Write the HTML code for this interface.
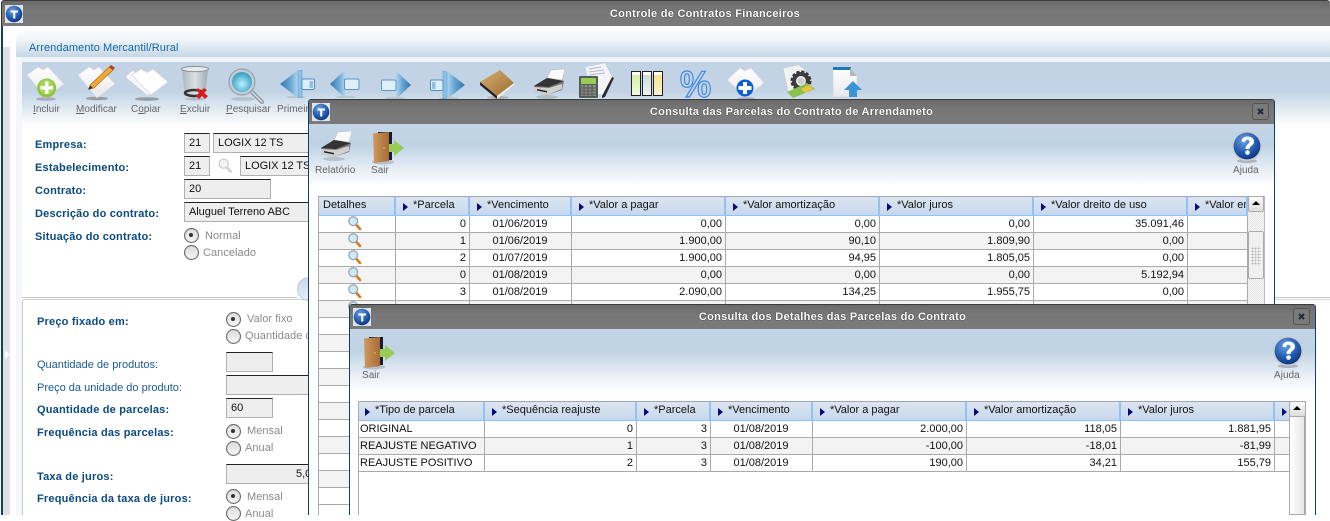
<!DOCTYPE html>
<html><head><meta charset="utf-8">
<style>
*{box-sizing:border-box}
html,body{margin:0;padding:0;width:1330px;height:515px;overflow:hidden;background:#fff;font-family:"Liberation Sans",sans-serif;font-size:11px;color:#111}
.a{position:absolute}
svg.a{overflow:visible}
.tb{position:absolute;left:0;right:0;top:0;height:25px;background:linear-gradient(#6a6a6a,#787878 40%,#7a7a7a);border-top:1px solid #3c3c3c;color:#fff;font-weight:bold;text-align:center;line-height:25px;letter-spacing:.28px;text-shadow:0 0 1px #000}
.lbl{position:absolute;font-weight:bold;color:#0a4a80;font-size:11px;line-height:14px;white-space:nowrap;letter-spacing:.2px}
.lbr{position:absolute;color:#1a5a90;font-size:11px;line-height:14px;white-space:nowrap;letter-spacing:0}
.inp{position:absolute;background:#eee;border:1px solid #b0b0b0;border-top:1px solid #222;height:20px;line-height:18px;padding-left:4px;font-size:11px;letter-spacing:-.05px;overflow:hidden;white-space:nowrap}
.rad{position:absolute;width:15px;height:15px;border-radius:50%;border:1.5px solid #666;background:linear-gradient(#ddd,#f4f4f4);box-shadow:inset 0 0 1px #999}
.rad.on:after{content:"";position:absolute;left:4px;top:4px;width:4px;height:4px;border-radius:50%;background:#333}
.rt{position:absolute;color:#8a8a8a;font-size:11px;line-height:14px;white-space:nowrap;letter-spacing:.05px}
.ic{position:absolute;color:#666;font-size:10px;line-height:12px;letter-spacing:.03px;white-space:nowrap}
.ic u{text-decoration:underline}
.win{position:absolute;background:#fff;border-left:1px solid #0e3f70;border-right:1px solid #0e3f70;overflow:hidden;border-radius:3px 3px 0 0}
.wgrad{position:absolute;left:0;right:0;top:25px;height:62px;background:linear-gradient(#c2d4e6,#c0d3e5 35%,#e6edf4 72%,#fff)}
table{position:absolute;border-collapse:separate;border-spacing:0;table-layout:fixed;font-size:11px;color:#111;background:#fff}
th{height:20px;font-weight:normal;text-align:left;background:linear-gradient(#dde5ef,#c6d8ee);border-top:1px solid #9aa8b8;border-bottom:1px solid #8fc3f5;border-right:2px solid #8fc3f5;padding:0 0 2px 4px;white-space:nowrap;overflow:hidden}
th i{display:inline-block;width:0;height:0;border-left:5px solid #0a0a78;border-top:4px solid transparent;border-bottom:4px solid transparent;margin:0 5px 0 3px;vertical-align:-3px}
td{height:17px;padding:1px 3px 0 2px;border-right:1px solid #aaa;border-bottom:1px solid #aaa;white-space:nowrap;overflow:hidden;line-height:15px;position:relative}
tr.e td{background:#f3f3f3}
td.r{text-align:right}
td.c{text-align:center}
td svg{display:block;position:relative;margin:0 auto;top:-1px;left:-1px}
.x{position:absolute;width:17px;height:17px;border:1px solid #555;border-radius:3px;background:#7a7a7a}
</style></head><body>
<svg width="0" height="0" style="position:absolute">
<defs>
<radialGradient id="gS" cx=".4" cy=".3" r=".8"><stop offset="0" stop-color="#6fa0e0"/><stop offset=".6" stop-color="#1e58ae"/><stop offset="1" stop-color="#0c2a6a"/></radialGradient>
<linearGradient id="gSh" x1="0" y1="0" x2="0" y2="1"><stop offset="0" stop-color="#fff"/><stop offset="1" stop-color="#e8e8ee"/></linearGradient>
<linearGradient id="gAr" x1="0" y1="0" x2="1" y2="0"><stop offset="0" stop-color="#2f78b4"/><stop offset=".6" stop-color="#6ba8d4"/><stop offset="1" stop-color="#b4d6ee"/></linearGradient>
<linearGradient id="gAr2" x1="0" y1="0" x2="1" y2="0"><stop offset="0" stop-color="#b4d6ee"/><stop offset=".4" stop-color="#6ba8d4"/><stop offset="1" stop-color="#2f78b4"/></linearGradient>
<linearGradient id="gBk" x1="0" y1="0" x2="1" y2="1"><stop offset="0" stop-color="#d8b070"/><stop offset="1" stop-color="#9a6c30"/></linearGradient>
<linearGradient id="gDr" x1="0" y1="0" x2="1" y2="0"><stop offset="0" stop-color="#d09a60"/><stop offset="1" stop-color="#a56c34"/></linearGradient>
<linearGradient id="gTr" x1="0" y1="0" x2="1" y2="0"><stop offset="0" stop-color="#a8b0b4"/><stop offset=".5" stop-color="#dfe4e6"/><stop offset="1" stop-color="#9aa2a6"/></linearGradient>
<radialGradient id="gLn" cx=".5" cy=".6" r=".6"><stop offset="0" stop-color="#b8f0f8"/><stop offset="1" stop-color="#2f9cc4"/></radialGradient>

<symbol id="logo" viewBox="0 0 18 18"><rect width="18" height="18" fill="#dfe3e8"/><circle cx="9" cy="9" r="8.3" fill="url(#gS)"/><path d="M5.500 5.500h7.500v2h-2.700V13.500H8.200V7.500H5.500z" fill="#fff"/></symbol>

<symbol id="sheet" viewBox="0 0 38 36"><path d="M0 9 11 1l5 3 5-3 16 17-18 14z" fill="url(#gSh)" stroke="#d8d8e0" stroke-width=".6"/><path d="M11 1l5 3 5-3z" fill="#d8d0e0"/></symbol>

<symbol id="pr" viewBox="0 0 33 30"><ellipse cx="14" cy="28" rx="11" ry="2" fill="#9aa" opacity=".55"/><path d="M14 9 18 1 32 0l-3 11z" fill="#fafafa" stroke="#bbb" stroke-width=".5"/><path d="M1 17 14 9l17 3-2 9-15 5-13-3z" fill="#7a7a7a"/><path d="M1 17l13-8 17 3-15 6z" fill="#333"/><path d="M1 18l15 1 13-4v5l-15 6-13-3z" fill="#d0d0d0"/><path d="M4 20l10 2v1.500L4 21.500z" fill="#222"/></symbol>

<symbol id="door" viewBox="0 0 32 33"><ellipse cx="11" cy="30" rx="11" ry="2.500" fill="#8a9aa8" opacity=".5"/><rect x="6" y="0" width="14" height="28" fill="#1a1a38"/><path d="M1 1.500 17 0v29L2 31z" fill="url(#gDr)"/><circle cx="12" cy="16" r=".8" fill="#f2d040"/><path d="M17 12h5V8l10 8-10 8v-4h-5z" fill="#98cc58"/></symbol>

<symbol id="help" viewBox="0 0 31 32"><ellipse cx="15" cy="30" rx="10" ry="2" fill="#888" opacity=".55"/><circle cx="15" cy="15" r="15" fill="#c8ccd4"/><circle cx="15" cy="15" r="13.400" fill="url(#gS)"/><path d="M9.500 10.500C10 6.500 13 5.500 15.500 5.500c4 0 6.500 2.300 6.500 5.200 0 3.800-4.500 4-4.500 7.300h-4c0-4.500 4-5 4-7.200 0-1.300-1-2-2.200-2-1.500 0-2.200 1-2.300 2.500z" fill="#fff"/><circle cx="15.500" cy="21.500" r="2.300" fill="#fff"/></symbol>

<symbol id="mag" viewBox="0 0 14 15"><path d="M8.500 9l3.500 4" stroke="#d87a20" stroke-width="2.600" stroke-linecap="round"/><circle cx="5.200" cy="5.200" r="4.400" fill="#cfeaf4" stroke="#9aa6ae" stroke-width="1.300"/></symbol>

<symbol id="arL" viewBox="0 0 30 28"><ellipse cx="16" cy="27.300" rx="10" ry="1.500" fill="#9aa" opacity=".4"/><path d="M0 14 15 0v28z" fill="url(#gAr)"/><rect x="14.500" y="9" width="14.500" height="10.500" rx="1.500" fill="#e0eef8" stroke="#5a98c8"/></symbol>
<symbol id="arR" viewBox="0 0 30 28"><ellipse cx="14" cy="27.300" rx="10" ry="1.500" fill="#9aa" opacity=".4"/><path d="M30 14 15 0v28z" fill="url(#gAr2)"/><rect x=".5" y="9" width="14.500" height="10.500" rx="1.500" fill="#e0eef8" stroke="#5a98c8"/></symbol>
<symbol id="arLL" viewBox="0 0 35 28"><ellipse cx="16" cy="27.300" rx="10" ry="1.500" fill="#9aa" opacity=".4"/><path d="M0 14 18 0v28z" fill="url(#gAr)"/><path d="M18 1l4-1v28l-4-1z" fill="#8cc0e8" stroke="#5a98c8" stroke-width=".5"/><rect x="22" y="9" width="12.500" height="10.500" rx="1.500" fill="#e0eef8" stroke="#4f90c4"/><rect x="29.500" y="11" width="3.500" height="7" fill="#8cc0e4"/></symbol>
<symbol id="arRR" viewBox="0 0 35 28"><ellipse cx="19" cy="27.300" rx="10" ry="1.500" fill="#9aa" opacity=".4"/><path d="M35 14 17 0v28z" fill="url(#gAr2)"/><path d="M17 1l-4-1v28l4-1z" fill="#8cc0e8" stroke="#5a98c8" stroke-width=".5"/><rect x=".5" y="9" width="12.500" height="10.500" rx="1.500" fill="#e0eef8" stroke="#4f90c4"/><rect x="2" y="11" width="3.500" height="7" fill="#8cc0e4"/></symbol>
</defs>
</svg>

<!-- main window -->
<div class="a" style="left:0;top:0;width:1330px;height:515px;background:#fff">
  <div class="a" style="left:1px;top:26px;width:2px;height:489px;background:#0e3f70"></div>
  <div class="a" style="left:3px;top:47px;width:7px;height:468px;background:#e0e0e0"></div>
  <svg class="a" style="left:5px;top:350px" width="6" height="9"><path d="M0 0l5 4.500L0 9z" fill="#fff"/></svg>
  <div class="a" style="left:16px;top:31px;width:1314px;height:26px;border-radius:9px 0 0 0;background:linear-gradient(#f8fbfd,#eef4f9 35%,#c6d7e6)"></div>
  <div class="a" style="left:16px;top:57px;width:1314px;height:5px;background:#eef3f8"></div>
  <div class="a" style="left:16px;top:57px;width:6px;height:458px;background:#f3f7fa"></div>
  <div class="a" style="left:22px;top:62px;width:1308px;height:64px;background:linear-gradient(#c1d3e5,#c1d3e5 45%,#e8eff5 80%,#fff)"></div>
  <div class="tb" style="height:26px;top:0;left:1px;border-radius:3px 3px 0 0;border-left:1px solid #333;line-height:27px;padding-left:78px">Controle de Contratos Financeiros</div>
  <svg class="a" style="left:5px;top:5px" width="18" height="18"><use href="#logo"/></svg>
  <div class="a" style="left:29px;top:41px;color:#1467a8;font-size:11px;line-height:14px;letter-spacing:.1px;white-space:nowrap">Arrendamento Mercantil/Rural</div>

  <!-- toolbar icons -->
  <svg class="a" style="left:27px;top:66px" width="38" height="36"><ellipse cx="19" cy="33" rx="10" ry="1.800" fill="#a080b0" opacity=".6"/><use href="#sheet"/><circle cx="19.700" cy="22" r="9.500" fill="#8cc63c"/><circle cx="19.700" cy="21" r="7.500" fill="#a8d658"/><path d="M18 15.500h3.500V20H26v3.500h-4.500V28H18v-4.500h-4.500V20H18z" fill="#fff"/></svg>
  <svg class="a" style="left:78px;top:65px" width="38" height="36"><ellipse cx="19" cy="33.500" rx="11" ry="1.800" fill="#666" opacity=".55"/><use href="#sheet" y="1"/><path d="M12 20 31 2l4 3-19 18-5 1.500z" fill="#f0a830" stroke="#a86a18" stroke-width=".6"/><path d="M31 2l2-2 4 3-2 2z" fill="#b83a30"/><path d="M10 24.500l2-4 3 2.500z" fill="#333"/></svg>
  <svg class="a" style="left:125px;top:66px" width="44" height="36"><ellipse cx="22" cy="33" rx="12" ry="1.800" fill="#666" opacity=".55"/><path d="M0 11 8 4l2 2 6-1 19 16-12 9z" fill="#f6f6f8" stroke="#cfcfd6" stroke-width=".6"/><path d="M7 9l9-6 3 2h6l3-2 15 13-17 13z" fill="#fff" stroke="#cfcfd6" stroke-width=".6"/><path d="M19 5l3 2 3-2z" fill="#d8d8e0"/></svg>
  <svg class="a" style="left:181px;top:66px" width="30" height="35"><ellipse cx="14" cy="33" rx="10" ry="1.500" fill="#888" opacity=".4"/><path d="M1 3h26l-3 27H4z" fill="url(#gTr)" opacity=".85"/><ellipse cx="14" cy="3" rx="13.500" ry="2.600" fill="#e6e9eb" stroke="#8a9298"/><ellipse cx="13" cy="27" rx="9" ry="3" fill="none" stroke="#333" stroke-width="2.500"/><path d="M17 22l3 3 3-3 3 2-3 3 4 3-3 3-3-3-3 3-3-3 3-3-3-3z" fill="#d81c1c"/></svg>
  <svg class="a" style="left:228px;top:68px" width="38" height="36"><ellipse cx="15" cy="31" rx="12" ry="2" fill="#a0a8b0" opacity=".5"/><path d="M23 23l11 11" stroke="#8a949c" stroke-width="4" stroke-linecap="round"/><path d="M23 23l11 11" stroke="#dde2e6" stroke-width="1.500" stroke-linecap="round"/><circle cx="14" cy="14" r="13" fill="#c4ccd2" stroke="#8f9aa2"/><circle cx="14" cy="14" r="10" fill="url(#gLn)"/></svg>
  <svg class="a" style="left:280px;top:70px" width="35" height="28"><use href="#arLL"/></svg>
  <svg class="a" style="left:330px;top:70px" width="30" height="28"><use href="#arL"/></svg>
  <svg class="a" style="left:381px;top:71px" width="30" height="28"><use href="#arR"/></svg>
  <svg class="a" style="left:430px;top:71px" width="35" height="28"><use href="#arRR"/></svg>
  <svg class="a" style="left:480px;top:70px" width="34" height="29"><ellipse cx="18" cy="27.500" rx="11" ry="1.500" fill="#888" opacity=".5"/><path d="M0 12 20 0l14 13-17 13z" fill="url(#gBk)"/><path d="M0 12l17 14v3L0 15z" fill="#222"/><path d="M17 26l17-13v2L17 29z" fill="#eee"/></svg>
  <svg class="a" style="left:533px;top:69px" width="33" height="30"><use href="#pr"/></svg>
  <svg class="a" style="left:579px;top:63px" width="36" height="36"><path d="M6 4 26 0l9 17-9 16-14-4z" fill="#f2f4f8" stroke="#c4ccd8" stroke-width=".5"/><path d="M10 6l12-2M10 9l15-2M10 12l16-2" stroke="#b0b8c4"/><path d="M23 33 33 14l2 1-9 19-3 1z" fill="#2c2c30"/><rect x="0" y="13" width="19" height="22" rx="1" fill="#555c58"/><rect x="2" y="15" width="15" height="6" fill="#9ccc50"/><rect x="2" y="22" width="15" height="11" fill="#8a8e8a"/><path d="M2 25h15M2 28h15M2 31h15M5 22v11M9 22v11M13 22v11" stroke="#555"/></svg>
  <svg class="a" style="left:631px;top:71px" width="33" height="27"><defs><linearGradient id="c1" x1="0" y1="0" x2="0" y2="1"><stop offset="0" stop-color="#d4ec9c"/><stop offset="1" stop-color="#f0fae0"/></linearGradient><linearGradient id="c2" x1="0" y1="0" x2="0" y2="1"><stop offset="0" stop-color="#c8d8d4"/><stop offset="1" stop-color="#eef4f2"/></linearGradient><linearGradient id="c3" x1="0" y1="0" x2="0" y2="1"><stop offset="0" stop-color="#fcdc84"/><stop offset="1" stop-color="#fdf3d0"/></linearGradient></defs><rect x=".5" y=".5" width="9" height="24" fill="url(#c1)" stroke="#222"/><rect x="11.500" y=".5" width="9" height="24" fill="url(#c2)" stroke="#222"/><rect x="22.500" y=".5" width="9" height="24" fill="url(#c3)" stroke="#222"/><rect x="1" y="1" width="8" height="3" fill="#fff"/><rect x="12" y="1" width="8" height="3" fill="#fff"/><rect x="23" y="1" width="8" height="3" fill="#fff"/></svg>
  <div class="a" style="left:680px;top:63px;font-size:37px;line-height:44px;font-weight:bold;color:#c6d3df;-webkit-text-stroke:1.200px #3c88e4;white-space:nowrap;transform:scaleX(.95);transform-origin:0 0">%</div>
  <svg class="a" style="left:727px;top:67px" width="38" height="36"><ellipse cx="19" cy="31.500" rx="9" ry="1.500" fill="#a080b0" opacity=".5"/><path d="M0 13 13 1l5 3 6-3 13 15-18 14z" fill="url(#gSh)" stroke="#d8d8e0" stroke-width=".6"/><path d="M13 1l5 3 6-3z" fill="#d8d0e0"/><circle cx="18" cy="21" r="8.500" fill="#0a5fd8"/><path d="M16 15h4v4h4.500v4H20v4h-4v-4h-4.500v-4H16z" fill="#fff"/></svg>
  <svg class="a" style="left:781px;top:65px" width="35" height="33"><path d="M2 3 18 0l6 5 1 19-17 6z" fill="#f0f3f0" stroke="#c8ccc8" stroke-width=".5"/><circle cx="20" cy="16" r="9" fill="none" stroke="#333" stroke-width="3" stroke-dasharray="3 1.700"/><circle cx="20" cy="16" r="7" fill="none" stroke="#3c3c3c" stroke-width="4"/><circle cx="20" cy="16" r="3.500" fill="#ccc"/><path d="M6 27l20-9 8 6-22 9z" fill="#8cc050"/><path d="M20 24l8-4 4 4-8 4z" fill="#f0c040"/></svg>
  <svg class="a" style="left:832px;top:66px" width="32" height="32"><path d="M1 2h17l7 8v21H1z" fill="url(#gSh)" stroke="#c8ccd0" stroke-width=".5"/><rect x="1" y="1" width="18" height="3" fill="#1e78b8"/><path d="M18 2l7 8h-7z" fill="#b4b8bc"/><path d="M21 15l9 9h-5v7h-8v-7h-5z" fill="#3a94d8"/></svg>

  <div class="ic" style="left:33px;top:104px"><u>I</u>ncluir</div>
  <div class="ic" style="left:76px;top:104px"><u>M</u>odificar</div>
  <div class="ic" style="left:131px;top:104px">C<u>o</u>piar</div>
  <div class="ic" style="left:180px;top:104px"><u>E</u>xcluir</div>
  <div class="ic" style="left:226px;top:104px"><u>P</u>esquisar</div>
  <div class="ic" style="left:277px;top:104px">Primeiro</div>

  <!-- form -->
  <div class="lbl" style="left:35px;top:138px">Empresa:</div>
  <div class="lbl" style="left:35px;top:161px">Estabelecimento:</div>
  <div class="lbl" style="left:35px;top:184px">Contrato:</div>
  <div class="lbl" style="left:35px;top:207px">Descrição do contrato:</div>
  <div class="lbl" style="left:35px;top:230px">Situação do contrato:</div>
  <div class="inp" style="left:184px;top:133px;width:26px">21</div>
  <div class="inp" style="left:213px;top:133px;width:100px">LOGIX 12 TS</div>
  <div class="inp" style="left:184px;top:156px;width:26px">21</div>
  <svg class="a" style="left:218px;top:158px;opacity:.55" width="14" height="15"><path d="M8.500 9l4 4.500" stroke="#aaa" stroke-width="2.600" stroke-linecap="round"/><circle cx="5.700" cy="5.700" r="4.600" fill="#e8eef0" stroke="#a8a8a8" stroke-width="1.300"/></svg>
  <div class="inp" style="left:240px;top:156px;width:75px">LOGIX 12 TS</div>
  <div class="inp" style="left:184px;top:179px;width:87px">20</div>
  <div class="inp" style="left:184px;top:202px;width:130px">Aluguel Terreno ABC</div>
  <div class="rad on" style="left:184px;top:228px"></div><div class="rt" style="left:205px;top:229px">Normal</div>
  <div class="rad" style="left:184px;top:245px"></div><div class="rt" style="left:203px;top:246px">Cancelado</div>
  <div class="a" style="left:297px;top:277px;width:24px;height:24px;border-radius:50%;background:linear-gradient(#c8d8ea,#e4edf6);border:1px solid #b4d0ec"></div>
  <div class="a" style="left:22px;top:297px;width:275px;height:1px;background:#c8c8c8"></div>
  <div class="a" style="left:1275px;top:297px;width:55px;height:1px;background:#c8c8c8"></div>
  <div class="a" style="left:1275px;top:299px;width:55px;height:1px;background:#d8d8d8"></div>
  <div class="a" style="left:22px;top:299px;width:300px;height:216px;border-left:1px solid #c8c8c8;border-top:1px solid #d0d0d0;border-radius:3px 0 0 0"></div>

  <div class="lbl" style="left:37px;top:315px">Preço fixado em:</div>
  <div class="lbr" style="left:37px;top:358px">Quantidade de produtos:</div>
  <div class="lbr" style="left:37px;top:381px">Preço da unidade do produto:</div>
  <div class="lbl" style="left:37px;top:403px">Quantidade de parcelas:</div>
  <div class="lbl" style="left:37px;top:426px">Frequência das parcelas:</div>
  <div class="lbl" style="left:37px;top:470px">Taxa de juros:</div>
  <div class="lbl" style="left:37px;top:492px">Frequência da taxa de juros:</div>
  <div class="rad on" style="left:226px;top:312px"></div><div class="rt" style="left:247px;top:312px">Valor fixo</div>
  <div class="rad" style="left:226px;top:329px"></div><div class="rt" style="left:245px;top:329px">Quantidade de produtos</div>
  <div class="inp" style="left:226px;top:352px;width:47px"></div>
  <div class="inp" style="left:226px;top:375px;width:90px"></div>
  <div class="inp" style="left:226px;top:398px;width:47px">60</div>
  <div class="rad on" style="left:226px;top:424px"></div><div class="rt" style="left:247px;top:424px">Mensal</div>
  <div class="rad" style="left:226px;top:441px"></div><div class="rt" style="left:245px;top:441px">Anual</div>
  <div class="inp" style="left:226px;top:464px;width:90px;padding-left:69px">5,000</div>
  <div class="rad on" style="left:226px;top:489px"></div><div class="rt" style="left:247px;top:490px">Mensal</div>
  <div class="rad" style="left:226px;top:506px"></div><div class="rt" style="left:245px;top:507px">Anual</div>
</div>

<!-- window 1 -->
<div class="win" style="left:308px;top:99px;width:967px;height:416px">
  <div class="wgrad"></div>
  <div class="tb">Consulta das Parcelas do Contrato de Arrendameto</div>
  <svg class="a" style="left:3px;top:4px" width="18" height="18"><use href="#logo"/></svg>
  <div class="x" style="left:943px;top:4px"><svg width="15" height="15" style="display:block"><path d="M5 5l5 5M10 5l-5 5" stroke="#222a44" stroke-width="2"/></svg></div>
  <svg class="a" style="left:11px;top:32px" width="33" height="30"><use href="#pr"/></svg>
  <svg class="a" style="left:63px;top:33px" width="32" height="33"><use href="#door"/></svg>
  <svg class="a" style="left:923px;top:32px" width="31" height="32"><use href="#help"/></svg>
  <div class="ic" style="left:6px;top:66px">Relatório</div>
  <div class="ic" style="left:62px;top:66px">Sair</div>
  <div class="ic" style="left:924px;top:66px">Ajuda</div>

  <table style="left:9px;top:97px;width:930px">
    <colgroup><col style="width:78px"><col style="width:74px"><col style="width:102px"><col style="width:154px"><col style="width:154px"><col style="width:154px"><col style="width:154px"><col style="width:60px"></colgroup>
    <tr><th style="padding-left:5px">Detalhes</th><th><i></i>*Parcela</th><th><i></i>*Vencimento</th><th><i></i>*Valor a pagar</th><th><i></i>*Valor amortização</th><th><i></i>*Valor juros</th><th><i></i>*Valor dreito de uso</th><th><i></i>*Valor em</th></tr>
    <tr><td class="c"><svg width="14" height="15"><use href="#mag"/></svg></td><td class="r">0</td><td class="c">01/06/2019</td><td class="r">0,00</td><td class="r">0,00</td><td class="r">0,00</td><td class="r">35.091,46</td><td></td></tr>
    <tr class="e"><td class="c"><svg width="14" height="15"><use href="#mag"/></svg></td><td class="r">1</td><td class="c">01/06/2019</td><td class="r">1.900,00</td><td class="r">90,10</td><td class="r">1.809,90</td><td class="r">0,00</td><td></td></tr>
    <tr><td class="c"><svg width="14" height="15"><use href="#mag"/></svg></td><td class="r">2</td><td class="c">01/07/2019</td><td class="r">1.900,00</td><td class="r">94,95</td><td class="r">1.805,05</td><td class="r">0,00</td><td></td></tr>
    <tr class="e"><td class="c"><svg width="14" height="15"><use href="#mag"/></svg></td><td class="r">0</td><td class="c">01/08/2019</td><td class="r">0,00</td><td class="r">0,00</td><td class="r">0,00</td><td class="r">5.192,94</td><td></td></tr>
    <tr><td class="c"><svg width="14" height="15"><use href="#mag"/></svg></td><td class="r">3</td><td class="c">01/08/2019</td><td class="r">2.090,00</td><td class="r">134,25</td><td class="r">1.955,75</td><td class="r">0,00</td><td></td></tr>
    <tr class="e"><td class="c"><svg width="14" height="15"><use href="#mag"/></svg></td><td></td><td></td><td></td><td></td><td></td><td></td><td></td></tr>
    <tr><td>&nbsp;</td><td></td><td></td><td></td><td></td><td></td><td></td><td></td></tr>
    <tr class="e"><td>&nbsp;</td><td></td><td></td><td></td><td></td><td></td><td></td><td></td></tr>
    <tr><td>&nbsp;</td><td></td><td></td><td></td><td></td><td></td><td></td><td></td></tr>
    <tr class="e"><td>&nbsp;</td><td></td><td></td><td></td><td></td><td></td><td></td><td></td></tr>
    <tr><td>&nbsp;</td><td></td><td></td><td></td><td></td><td></td><td></td><td></td></tr>
    <tr class="e"><td>&nbsp;</td><td></td><td></td><td></td><td></td><td></td><td></td><td></td></tr>
    <tr><td>&nbsp;</td><td></td><td></td><td></td><td></td><td></td><td></td><td></td></tr>
    <tr class="e"><td>&nbsp;</td><td></td><td></td><td></td><td></td><td></td><td></td><td></td></tr>
    <tr><td>&nbsp;</td><td></td><td></td><td></td><td></td><td></td><td></td><td></td></tr>
    <tr class="e"><td>&nbsp;</td><td></td><td></td><td></td><td></td><td></td><td></td><td></td></tr>
    <tr><td>&nbsp;</td><td></td><td></td><td></td><td></td><td></td><td></td><td></td></tr>
  </table>
  <div class="a" style="left:9px;top:97px;width:1px;height:319px;background:#aaa"></div>
  <!-- scrollbar -->
  <div class="a" style="left:939px;top:97px;width:17px;height:210px;background:repeating-conic-gradient(#e4e4e4 0 25%,#f8f8f8 0 50%) 0 0/2px 2px;border:1px solid #bbb;border-left:0"></div>
  <div class="a" style="left:939px;top:97px;width:16px;height:16px;background:linear-gradient(#fafafa,#ddd);border:1px solid #aaa;border-radius:2px"><svg width="14" height="14" style="display:block"><path d="M3 8l4-4 4 4z" fill="#000"/></svg></div>
  <div class="a" style="left:939px;top:132px;width:16px;height:48px;background:#f0f0f0;border:1px solid #aaa;border-radius:2px"><div style="position:absolute;left:2px;top:15px;width:10px;height:18px;background:radial-gradient(#b8b8b8 40%,transparent 45%) 0 0/3px 3px"></div></div>
</div>

<!-- window 2 -->
<div class="win" style="left:349px;top:304px;width:967px;height:211px">
  <div class="wgrad"></div>
  <div class="tb">Consulta dos Detalhes das Parcelas do Contrato</div>
  <svg class="a" style="left:3px;top:4px" width="18" height="18"><use href="#logo"/></svg>
  <div class="x" style="left:943px;top:4px"><svg width="15" height="15" style="display:block"><path d="M5 5l5 5M10 5l-5 5" stroke="#222a44" stroke-width="2"/></svg></div>
  <svg class="a" style="left:13px;top:33px" width="32" height="33"><use href="#door"/></svg>
  <svg class="a" style="left:923px;top:32px" width="31" height="32"><use href="#help"/></svg>
  <div class="ic" style="left:12px;top:66px">Sair</div>
  <div class="ic" style="left:924px;top:66px">Ajuda</div>

  <table style="left:8px;top:97px;width:931px">
    <colgroup><col style="width:127px"><col style="width:152px"><col style="width:74px"><col style="width:102px"><col style="width:154px"><col style="width:154px"><col style="width:154px"><col style="width:14px"></colgroup>
    <tr><th><i></i>*Tipo de parcela</th><th><i></i>*Sequência reajuste</th><th><i></i>*Parcela</th><th><i></i>*Vencimento</th><th><i></i>*Valor a pagar</th><th><i></i>*Valor amortização</th><th><i></i>*Valor juros</th><th style="border-right:0"><i></i></th></tr>
    <tr><td>ORIGINAL</td><td class="r">0</td><td class="r">3</td><td class="c">01/08/2019</td><td class="r">2.000,00</td><td class="r">118,05</td><td class="r">1.881,95</td><td style="border-right:0"></td></tr>
    <tr class="e"><td>REAJUSTE NEGATIVO</td><td class="r">1</td><td class="r">3</td><td class="c">01/08/2019</td><td class="r">-100,00</td><td class="r">-18,01</td><td class="r">-81,99</td><td style="border-right:0"></td></tr>
    <tr><td>REAJUSTE POSITIVO</td><td class="r">2</td><td class="r">3</td><td class="c">01/08/2019</td><td class="r">190,00</td><td class="r">34,21</td><td class="r">155,79</td><td style="border-right:0"></td></tr>
  </table>
  <div class="a" style="left:8px;top:97px;width:1px;height:114px;background:#aaa"></div>
  <div class="a" style="left:939px;top:97px;width:17px;height:114px;background:linear-gradient(90deg,#fff,#e8e8e8);border:1px solid #aaa;border-right:2px solid #aaa"></div>
  <div class="a" style="left:939px;top:97px;width:17px;height:16px;background:linear-gradient(#fafafa,#ddd);border:1px solid #aaa;border-radius:2px"><svg width="14" height="14" style="display:block"><path d="M3 8l4-4 4 4z" fill="#000"/></svg></div>
</div>
</body></html>
